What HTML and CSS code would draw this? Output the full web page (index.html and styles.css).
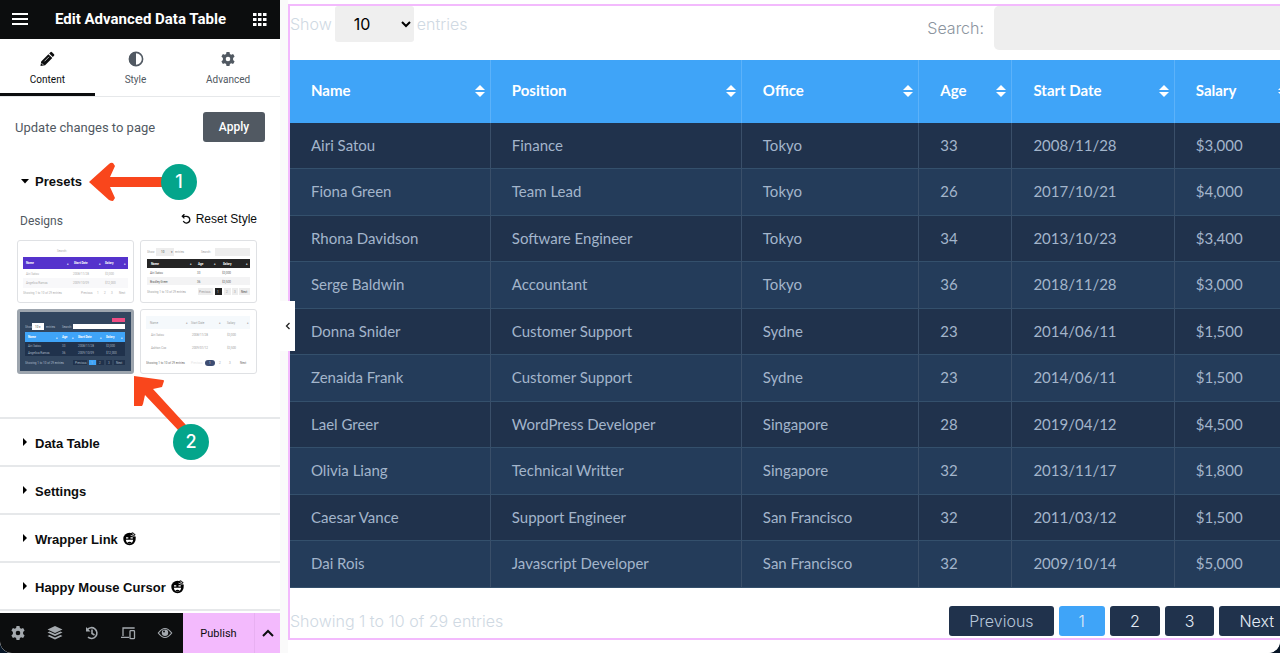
FILE: index.html
```
<!DOCTYPE html>
<html lang="en">

<head>
    <meta charset="utf-8">
    <title>Edit Advanced Data Table</title>
    <link rel="stylesheet" href="styles.css">
</head>

<body>
    <div class="editor">
        <aside class="panel">
            <header class="panel-header">
                <button class="icon-btn" aria-label="Menu">
                    <svg width="16" height="12" viewBox="0 0 16 12"><path d="M0 1h16M0 6h16M0 11h16" stroke="#fff" stroke-width="2" /></svg>
                </button>
                <h1>Edit Advanced Data Table</h1>
                <button class="icon-btn" aria-label="Widgets">
                    <svg width="14" height="14" viewBox="0 0 14 14" fill="#fff"><path d="M0 1h3.500v3H0zM5 1h3.500v3H5zM10 1h3.500v3H10zM0 6h3.500v3H0zM5 6h3.500v3H5zM10 6h3.500v3H10zM0 11h3.500v3H0zM5 11h3.500v3H5zM10 11h3.500v3H10z" /></svg>
                </button>
            </header>

            <nav class="tabs">
                <button class="tab active">
                    <svg width="16" height="16" viewBox="0 0 16 16"><path d="M1.500 15l.7-4.600 7.200-7.200 3.900 3.900-7.200 7.200zM10.200 2.400l1.200-1.200q.8-.7 1.600 0l2 2q.8.800 0 1.600l-1.200 1.200z" fill="#0c0d0e" /><path d="M5.500 10.300l4.500-4.500" stroke="#fff" stroke-width=".7" /><path d="M2.700 12.300l1.500 1.500" stroke="#fff" stroke-width=".9" /></svg>
                    <span>Content</span>
                </button>
                <button class="tab">
                    <svg width="16" height="16" viewBox="0 0 16 16"><circle cx="8" cy="8" r="6.600" fill="none" stroke="#515962" stroke-width="1.600" /><path d="M8 1a7 7 0 0 0 0 14z" fill="#515962" /></svg>
                    <span>Style</span>
                </button>
                <button class="tab">
                    <svg width="16" height="16" viewBox="0 0 16 16"><use href="#gear" fill="#515962" /></svg>
                    <span>Advanced</span>
                </button>
            </nav>

            <div class="panel-body">
                <div class="apply-row">
                    <span>Update changes to page</span>
                    <button class="apply">Apply</button>
                </div>

                <section class="section">
                    <button class="section-title"><svg width="10" height="10" viewBox="0 0 10 10"><path d="M1 3h8L5 7.500z" /></svg>Presets</button>
                    <div class="presets">
                        <div class="presets-head">
                            <span>Designs</span>
                            <button class="reset"><svg width="10" height="10" viewBox="0 0 10 10" fill="none" stroke="#0c0d0e" stroke-width="1.300"><path d="M1.500 2.300H5.500a3.400 3.400 0 1 1-3.200 4.800M3.400.2L1.300 2.300l2.100 2.100" /></svg>Reset Style</button>
                        </div>
                        <div class="designs">
                            <label class="design">
                                <input type="radio" name="design" aria-label="Purple design">
                                <svg viewBox="0 0 115 61">
                                    <path d="M5 16h105v12H5z" fill="#5533cc" />
                                    <path d="M5 37h105v10H5z" fill="#f8f8fa" />
                                    <g class="thumb-text" fill="#999">
                                        <text x="39" y="11">Search:</text>
                                        <text x="8" y="34">Airi Satou</text><text x="55" y="34">2008/11/28</text><text x="87" y="34">$3,000</text>
                                        <text x="8" y="43">Angelica Ramos</text><text x="55" y="43">2009/10/09</text><text x="87" y="43">$12,000</text>
                                        <text x="5" y="53">Showing 1 to 10 of 29 entries</text><text x="63" y="53">Previous</text><text x="79" y="53">1</text><text x="86" y="53">2</text><text x="93" y="53">3</text><text x="101" y="53">Next</text>
                                    </g>
                                    <g class="thumb-head" fill="#fff"><text x="8" y="23">Name</text><text x="49" y="24">♦</text><text x="56" y="23">Start Date</text><text x="81" y="24">♦</text><text x="87" y="23">Salary</text><text x="106" y="24">♦</text></g>
                                </svg>
                            </label>
                            <label class="design">
                                <input type="radio" name="design" aria-label="Black design">
                                <svg viewBox="0 0 115 61">
                                    <path d="M15 7h18v8H15zM74 7h35v8H74zM57 47h15v7H57zM83 47h7v7h-7zM91 47h6v7h-6zM98 47h11v7H98z" fill="#ededed" />
                                    <path d="M6 18h103v9H6z" fill="#252525" />
                                    <path d="M6 36h103v8H6z" fill="#f3f3f4" />
                                    <path d="M74 47h7v7h-7z" fill="#222" />
                                    <g class="thumb-text" fill="#888">
                                        <text x="6" y="12">Show</text><text x="20" y="12" fill="#222">10</text><text x="30" y="12" fill="#222">▾</text><text x="34" y="12">entries</text><text x="60" y="12">Search:</text>
                                        <g fill="#333"><text x="9" y="33">Airi Satou</text><text x="56" y="33">33</text><text x="81" y="33">$3,000</text>
                                        <text x="9" y="42">Bradley Greer</text><text x="56" y="42">36</text><text x="81" y="42">$3,500</text></g>
                                        <text x="6" y="52">Showing 1 to 10 of 29 entries</text><text x="58" y="52">Previous</text><text x="76" y="52" fill="#fff">1</text><text x="85" y="52">2</text><text x="93" y="52">3</text><text x="100" y="52" fill="#222">Next</text>
                                    </g>
                                    <g class="thumb-head" fill="#fff"><text x="10" y="24">Name</text><text x="49" y="24">♦</text><text x="57" y="24">Age</text><text x="73" y="24">♦</text><text x="82" y="24">Salary</text><text x="105" y="24">♦</text></g>
                                </svg>
                            </label>
                            <label class="design selected">
                                <input type="radio" name="design" aria-label="Blue design" checked>
                                <svg viewBox="2 1 111 59">
                                    <path d="M0 0h115v61H0z" fill="#32465f" />
                                    <path d="M94 7h13v4H94z" fill="#ee4d83" />
                                    <path d="M14 12h12v7H14zM55 13h52v5H55z" fill="#fff" />
                                    <path d="M7 21h100v10H7z" fill="#3fa4f8" />
                                    <path d="M7 31h100v14H7z" fill="#20324c" />
                                    <path d="M55 49h14v5H55zM79 49h7v5h-7zM88 49h6v5h-6zM96 49h11v5H96z" fill="#20324c" />
                                    <path d="M71 49h7v5h-7z" fill="#3fa4f8" />
                                    <g class="thumb-text" fill="#c3d0df">
                                        <text x="7" y="17">Show</text><text x="17" y="17" fill="#222">10 ▾</text><text x="28" y="17">entries</text><text x="44" y="17">Search:</text>
                                        <text x="10" y="36">Airi Satou</text><text x="44" y="36">33</text><text x="60" y="36">2008/11/28</text><text x="88" y="36">$3,000</text>
                                        <text x="10" y="43">Angelica Ramos</text><text x="44" y="43">36</text><text x="60" y="43">2009/10/09</text><text x="88" y="43">$12,000</text>
                                        <text x="7" y="53">Showing 1 to 10 of 29 entries</text><text x="57" y="53">Previous</text><text x="73" y="53">1</text><text x="81" y="53">2</text><text x="90" y="53">3</text><text x="98" y="53">Next</text>
                                    </g>
                                    <g class="thumb-head" fill="#fff"><text x="10" y="27">Name</text><text x="38" y="28">♦</text><text x="44" y="27">Age</text><text x="54" y="28">♦</text><text x="60" y="27">Start Date</text><text x="82" y="28">♦</text><text x="88" y="27">Salary</text><text x="103" y="28">♦</text></g>
                                </svg>
                            </label>
                            <label class="design">
                                <input type="radio" name="design" aria-label="Light design">
                                <svg viewBox="0 0 115 61">
                                    <path d="M5 6h104v13H5z" fill="#f5f9fc" />
                                    <rect x="64" y="50" width="10" height="6" rx="3" fill="#3d4d73" />
                                    <g class="thumb-text" fill="#888">
                                        <text x="9" y="14">Name</text><text x="45" y="14">♦</text><text x="50" y="14">Start Date</text><text x="78" y="14">♦</text><text x="86" y="14">Salary</text><text x="106" y="14">♦</text>
                                        <text x="10" y="26">Airi Satou</text><text x="51" y="26">2008/11/28</text><text x="86" y="26">$3,000</text>
                                        <text x="10" y="39">Ashton Cox</text><text x="51" y="39">2009/01/12</text><text x="86" y="39">$3,500</text>
                                        <text x="5" y="54" fill="#444">Showing 1 to 10 of 29 entries</text><text x="50" y="54" fill="#ddd">Previous</text><text x="68" y="54" fill="#fff">1</text><text x="78" y="54">2</text><text x="88" y="54">3</text><text x="99" y="54" fill="#444">Next</text>
                                    </g>
                                </svg>
                            </label>
                        </div>
                    </div>
                </section>

                <section class="section">
                    <button class="section-title"><svg width="10" height="10" viewBox="0 0 10 10"><path d="M3 0v8l4-4z" /></svg>Data Table</button>
                </section>
                <section class="section">
                    <button class="section-title"><svg width="10" height="10" viewBox="0 0 10 10"><path d="M3 0v8l4-4z" /></svg>Settings</button>
                </section>
                <section class="section">
                    <button class="section-title"><svg width="10" height="10" viewBox="0 0 10 10"><path d="M3 0v8l4-4z" /></svg>Wrapper Link
                        <svg width="14" height="14" viewBox="0 0 14 14"><use href="#happy" /></svg></button>
                </section>
                <section class="section">
                    <button class="section-title"><svg width="10" height="10" viewBox="0 0 10 10"><path d="M3 0v8l4-4z" /></svg>Happy Mouse Cursor
                        <svg width="14" height="14" viewBox="0 0 14 14"><use href="#happy" /></svg></button>
                </section>
            </div>

            <footer class="panel-footer">
                <div class="tools">
                    <button class="icon-btn" aria-label="Page settings"><svg width="16" height="16" viewBox="0 0 16 16"><use href="#gear" fill="#a4a9ae" /></svg></button>
                    <button class="icon-btn" aria-label="Navigator"><svg width="16" height="16" viewBox="0 0 16 16" fill="#a4a9ae"><path d="M8 1l7.500 3.500L8 8 .5 4.500zM2.500 6.500L8 9l5.500-2.500 2 1L8 11 .5 7.500zM2.500 10L8 12.500l5.500-2.500 2 1L8 14.500.5 11z" /></svg></button>
                    <button class="icon-btn" aria-label="History"><svg width="16" height="16" viewBox="0 0 16 16" fill="none" stroke="#a4a9ae" stroke-width="1.600"><path d="M3.200 4.800A5.400 5.400 0 1 1 4 12.200M8 4.500v4l2.500 1.500" /><path d="M2 2v4.500h4.500z" fill="#a4a9ae" stroke="none" /></svg></button>
                    <button class="icon-btn" aria-label="Responsive mode"><svg width="16" height="16" viewBox="0 0 16 16" fill="none" stroke="#a4a9ae" stroke-width="1.300"><path d="M14 3.700V3H3v8M1 12.300h8" /><rect x="10" y="5.700" width="4.500" height="8" rx=".8" /></svg></button>
                    <button class="icon-btn" aria-label="Preview"><svg width="16" height="16" viewBox="0 0 16 16"><path d="M1.300 8Q8-1 14.700 8 8 17 1.300 8z" fill="none" stroke="#a4a9ae" stroke-width="1.200" /><circle cx="8" cy="7.700" r="3.200" fill="#a4a9ae" /><circle cx="7" cy="6.600" r="1" fill="#0c0d0e" /></svg></button>
                </div>
                <button class="publish">Publish</button>
                <button class="publish-more" aria-label="Save options"><svg width="12" height="8" viewBox="0 0 12 8"><path d="M1 7l5-5 5 5" fill="none" stroke="#0c0d0e" stroke-width="2" /></svg></button>
            </footer>
            <button class="collapse" aria-label="Hide panel"><svg width="6" height="8" viewBox="0 0 6 8"><path d="M4.500 1L1.500 4l3 3" fill="none" stroke="#222" stroke-width="1.300" /></svg></button>
        </aside>

        <main class="preview">
            <div class="widget">
                <div class="table-top">
                    <label class="length">Show
                        <select>
                            <option>10</option>
                            <option>25</option>
                            <option>50</option>
                        </select>
                        entries</label>
                    <label class="search">Search: <input type="search"></label>
                </div>
                <table>
                    <colgroup>
                        <col class="c-name">
                        <col class="c-position">
                        <col class="c-office">
                        <col class="c-age">
                        <col class="c-date">
                        <col class="c-salary">
                    </colgroup>
                    <thead>
                        <tr>
                            <th><div>Name<i class="sort"></i></div></th>
                            <th><div>Position<i class="sort"></i></div></th>
                            <th><div>Office<i class="sort"></i></div></th>
                            <th><div>Age<i class="sort"></i></div></th>
                            <th><div>Start Date<i class="sort"></i></div></th>
                            <th><div>Salary<i class="sort"></i></div></th>
                        </tr>
                    </thead>
                    <tbody>
                        <tr><td>Airi Satou</td><td>Finance</td><td>Tokyo</td><td>33</td><td>2008/11/28</td><td>$3,000</td></tr>
                        <tr><td>Fiona Green</td><td>Team Lead</td><td>Tokyo</td><td>26</td><td>2017/10/21</td><td>$4,000</td></tr>
                        <tr><td>Rhona Davidson</td><td>Software Engineer</td><td>Tokyo</td><td>34</td><td>2013/10/23</td><td>$3,400</td></tr>
                        <tr><td>Serge Baldwin</td><td>Accountant</td><td>Tokyo</td><td>36</td><td>2018/11/28</td><td>$3,000</td></tr>
                        <tr><td>Donna Snider</td><td>Customer Support</td><td>Sydne</td><td>23</td><td>2014/06/11</td><td>$1,500</td></tr>
                        <tr><td>Zenaida Frank</td><td>Customer Support</td><td>Sydne</td><td>23</td><td>2014/06/11</td><td>$1,500</td></tr>
                        <tr><td>Lael Greer</td><td>WordPress Developer</td><td>Singapore</td><td>28</td><td>2019/04/12</td><td>$4,500</td></tr>
                        <tr><td>Olivia Liang</td><td>Technical Writter</td><td>Singapore</td><td>32</td><td>2013/11/17</td><td>$1,800</td></tr>
                        <tr><td>Caesar Vance</td><td>Support Engineer</td><td>San Francisco</td><td>32</td><td>2011/03/12</td><td>$1,500</td></tr>
                        <tr><td>Dai Rois</td><td>Javascript Developer</td><td>San Francisco</td><td>32</td><td>2009/10/14</td><td>$5,000</td></tr>
                    </tbody>
                </table>
                <div class="table-bottom">
                    <span>Showing 1 to 10 of 29 entries</span>
                    <div class="pages">
                        <button class="previous">Previous</button>
                        <button class="current">1</button>
                        <button>2</button>
                        <button>3</button>
                        <button>Next</button>
                    </div>
                </div>
            </div>
        </main>

        <!-- numbered steps over the panel -->
        <svg class="steps" width="280" height="470" viewBox="0 0 280 470">
            <g fill="#f9461c">
                <path d="M89 182l20-18q2-2 4-1l2 3-5 11h54v10h-54l5 11-2 3q-2 0-4-1z" />
                <path d="M134 376l29 4q1 0 1 1l-2 6-9 2 33 36-7 6-34-36-2 9-1 2h-8z" />
            </g>
            <circle cx="179" cy="182" r="18" fill="#04a58b" />
            <circle cx="191" cy="442" r="18" fill="#04a58b" />
            <text x="179" y="188">1</text>
            <text x="191" y="448">2</text>
        </svg>
    </div>

    <svg class="defs" width="0" height="0">
        <defs>
            <path id="gear" fill-rule="evenodd" d="M6.500 1h3l.4 2 1.300.7 1.900-.7 1.500 2.600L13.100 7v2l1.500 1.400-1.500 2.600-1.900-.7-1.300.7-.4 2h-3l-.4-2-1.300-.7-1.900.7-1.500-2.600L2.900 9V7L1.400 5.600 2.900 3l1.900.7L6.100 3zM8 5.700a2.300 2.300 0 1 0 0 4.600 2.300 2.300 0 0 0 0-4.600z" />
            <g id="happy">
                <circle cx="6.500" cy="7" r="6.200" />
                <path d="M8 1l2-.7.8 1.200 1.600.6-.4 1.900 1 1.300-2 .3z" />
                <path d="M7.500 3.200Q10 4.500 13 4M9 1.800l2.300 1" fill="none" stroke="#fff" stroke-width=".7" />
                <path d="M3 5.800h2.300M7.500 5.800h2.300" stroke="#fff" stroke-width="1.200" />
                <path d="M2.800 7.800h7.400q-.4 3.600-3.700 3.600T2.800 7.800z" fill="#fff" />
                <path d="M4.200 10.500q2.300-1.500 4.600 0-2.300 1.800-4.600 0z" />
            </g>
        </defs>
    </svg>
</body>

</html>
```
FILE: styles.css
```
* {
    box-sizing: border-box;
}

body {
    margin: 0;
    background: #061526;
    font-family: Roboto, sans-serif;
}

button {
    border: 0;
    padding: 0;
    background: none;
    font: inherit;
    color: inherit;
    cursor: pointer;
}

svg {
    display: block;
    flex: none;
}

.editor {
    position: relative;
    display: flex;
    height: 100vh;
    overflow: hidden;
    background: #fff;
    border-radius: 0 0 12px 12px;
}

/* left panel */
.panel {
    position: relative;
    display: flex;
    flex: none;
    flex-direction: column;
    width: 280px;
    background: #fff;
}

.panel-header {
    display: flex;
    flex: none;
    align-items: center;
    justify-content: space-between;
    height: 39px;
    padding: 0 13px 2px 12px;
    background: #0c0d0e;
}

.panel-header h1 {
    margin: 0;
    color: #fff;
    font-size: 15px;
    font-weight: 700;
}

.tabs {
    display: flex;
    flex: none;
    height: 58px;
    border-bottom: 1px solid #e6e8ea;
}

.tab {
    display: flex;
    flex: 1 1 auto;
    flex-direction: column;
    align-items: center;
    gap: 6px;
    padding-top: 12px;
    color: #515962;
    font-size: 10px;
    line-height: 14px;
}

.tab.active {
    border-bottom: 3px solid #0c0d0e;
    color: #0c0d0e;
}

.panel-body {
    flex: 1;
    min-height: 0;
    overflow: hidden;
}

.apply-row {
    display: flex;
    align-items: center;
    justify-content: space-between;
    height: 60px;
    padding: 0 15px;
    color: #515962;
    font-size: 13px;
}

.apply {
    width: 62px;
    height: 30px;
    border-radius: 3px;
    background: #515962;
    color: #fff;
    font-size: 12px;
    font-weight: 500;
}

.section {
    border-bottom: 2px solid #e6e8ea;
}

.section-title {
    display: flex;
    align-items: center;
    gap: 5px;
    width: 100%;
    height: 46px;
    padding: 2px 20px 0;
    color: #0c0d0e;
    font: bold 13px "Liberation Sans", sans-serif;
}

.presets {
    padding: 8px 23px 43px 17px;
}

.presets-head {
    display: flex;
    align-items: center;
    justify-content: space-between;
    height: 20px;
    margin-bottom: 9px;
    padding-left: 3px;
    color: #515962;
    font-size: 12px;
}

.reset {
    display: flex;
    align-items: center;
    gap: 5px;
    padding-bottom: 4px;
    color: #0c0d0e;
    font: 12px "Liberation Sans", sans-serif;
}

.designs {
    display: grid;
    grid-template-columns: 1fr 1fr;
    gap: 6px;
}

.design {
    position: relative;
    overflow: hidden;
    border: 1px solid #dfe1e4;
    border-radius: 3px;
}

.design input {
    position: absolute;
    opacity: 0;
}

.design.selected {
    border: 3px solid #9da5ae;
}

.design svg {
    width: 100%;
}

.thumb-text,
.thumb-head {
    font-size: 3px;
}

.thumb-text {
    opacity: .8;
}

.thumb-head {
    font-weight: 700;
}

.panel-footer {
    display: flex;
    flex: none;
    height: 40px;
    background: #0c0d0e;
}

.tools {
    display: flex;
    flex: 1;
    align-items: center;
    justify-content: space-between;
    padding: 0 10px;
}

.publish,
.publish-more {
    background: #f3bafd;
    color: #0c0d0e;
    font-size: 11px;
}

.publish {
    width: 72px;
    border-right: 1px solid #e8b0f2;
}

.publish-more {
    display: flex;
    align-items: center;
    justify-content: center;
    width: 25px;
}

.collapse {
    position: absolute;
    left: 280px;
    top: calc(50% - 26px);
    z-index: 2;
    display: flex;
    align-items: center;
    justify-content: center;
    width: 15px;
    height: 50px;
    background: #fff;
}

/* page preview */
.preview {
    flex: 1;
    min-width: 0;
    overflow: hidden;
    padding: 4px 0 0 8px;
    background: linear-gradient(to right, #fafafa 8px, #fff 8px);
}

.widget {
    width: calc(100% + 16px);
    min-width: 1008px;
    border: 2px solid #f3bafd;
    color: #cfd9e3;
    font: 300 16px Inter, sans-serif;
}

.table-top {
    display: flex;
    justify-content: space-between;
    height: 54px;
}

.length,
.search {
    display: flex;
    align-items: center;
    gap: 3px;
}

.length {
    height: 36px;
}

.length select {
    width: 79px;
    height: 36px;
    padding: 0 0 0 15px;
    border: 0;
    border-radius: 3px;
    background: #efefef;
    color: #000;
    font: 400 16px Inter, sans-serif;
}

.search {
    gap: 10px;
    height: 44px;
    color: #8b949e;
}

.search input {
    width: 300px;
    height: 44px;
    border: 0;
    border-radius: 5px;
    background: #eee;
}

table {
    width: 100%;
    table-layout: fixed;
    border-collapse: separate;
    border-spacing: 0;
    font-family: Lato, sans-serif;
    font-size: 15px;
}

.c-name {
    width: 20%;
}

.c-position {
    width: 25%;
}

.c-office {
    width: 177px;
}

.c-age {
    width: 93px;
}

.c-date {
    width: 162px;
}

.c-salary {
    width: 119px;
}

th {
    height: 63px;
    padding: 0 5px 3px 21px;
    border-right: 1px solid #5cb2fa;
    background: #3fa4f8;
    color: #fff;
    font-weight: 700;
    text-align: left;
}

th div {
    display: flex;
    align-items: center;
    justify-content: space-between;
}

/* up and down arrows */
.sort {
    margin-top: 2px;
}

.sort::before,
.sort::after {
    content: "";
    display: block;
    border: 5px solid transparent;
}

.sort::before {
    border-top: 0;
    border-bottom-color: #fff;
}

.sort::after {
    margin-top: 2px;
    border-bottom: 0;
    border-top-color: #fff;
}

td {
    height: 46px;
    padding: 0 0 2px 21px;
    border-right: 1px solid #3a4f69;
    border-bottom: 1px solid #34506c;
    background: #20324c;
    color: #a3b5cb;
    font-weight: 400;
}

tr:nth-child(even) td {
    height: 47px;
    background: #243c5a;
}

.table-bottom {
    display: flex;
    justify-content: space-between;
    padding: 18px 0 2px;
    line-height: 30px;
}

.pages {
    display: flex;
    gap: 5px;
}

.pages button {
    height: 30px;
    padding: 0 20px;
    border-radius: 3px;
    background: #20324c;
    color: #e3ebf5;
}

.pages .previous {
    color: #b5c5d8;
}

.pages .current {
    background: #3fa4f8;
}

.steps {
    position: absolute;
    left: 0;
    top: 0;
    pointer-events: none;
}

.steps text {
    fill: #fff;
    font: 500 18px Inter, sans-serif;
    text-anchor: middle;
}

.defs {
    position: absolute;
}
```
